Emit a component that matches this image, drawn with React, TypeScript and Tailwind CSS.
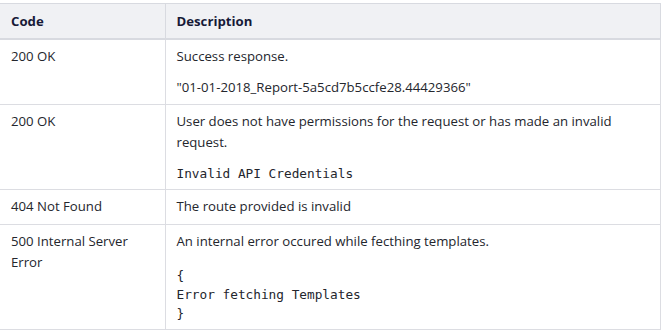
const rows = [
  {
    code: "200 OK",
    body: (
      <>
        <p className="mb-[10px]">Success response.</p>
        <p>"01-01-2018_Report-5a5cd7b5ccfe28.44429366"</p>
      </>
    ),
  },
  {
    code: "200 OK",
    body: (
      <>
        <p>User does not have permissions for the request or has made an invalid request.</p>
        <pre className="mt-[11px] font-['DejaVu_Sans_Mono',monospace] text-[12.75px] leading-[19px]">Invalid API Credentials</pre>
      </>
    ),
  },
  {
    code: "404 Not Found",
    body: <p className="pb-px">The route provided is invalid</p>,
  },
  {
    code: "500 Internal Server Error",
    body: (
      <>
        <p>An internal error occured while fecthing templates.</p>
        <pre className="mt-[14px] font-['DejaVu_Sans_Mono',monospace] text-[12.75px] leading-[19px]">{"{\nError fetching Templates\n}"}</pre>
      </>
    ),
  },
];

export default function App() {
  return (
    <div className="w-[661px] h-[331px] bg-white pt-[3px] font-['Open_Sans',sans-serif] text-[13.2px] leading-[21px] text-[#24262d]">
      <table className="w-[661px] border-collapse table-fixed">
        <colgroup>
          <col className="w-[165px]" />
          <col />
        </colgroup>
        <thead>
          <tr className="bg-[#f0f1f4] text-[#171a38]">
            <th className="text-left font-bold px-[11px] pt-[7px] pb-[6px] border-t border-r border-b-2 border-[#d8dae0]">Code</th>
            <th className="text-left font-bold px-[11px] pt-[7px] pb-[6px] border-t border-r border-b-2 border-[#d8dae0]">Description</th>
          </tr>
        </thead>
        <tbody>
          {rows.map((r, i) => (
            <tr key={i}>
              <td className="align-top px-[11px] py-[6px] border-r border-b border-[#dcdde2]">{r.code}</td>
              <td className="align-top px-[11px] py-[6px] border-r border-b border-[#dcdde2]">{r.body}</td>
            </tr>
          ))}
        </tbody>
      </table>
    </div>
  );
}
